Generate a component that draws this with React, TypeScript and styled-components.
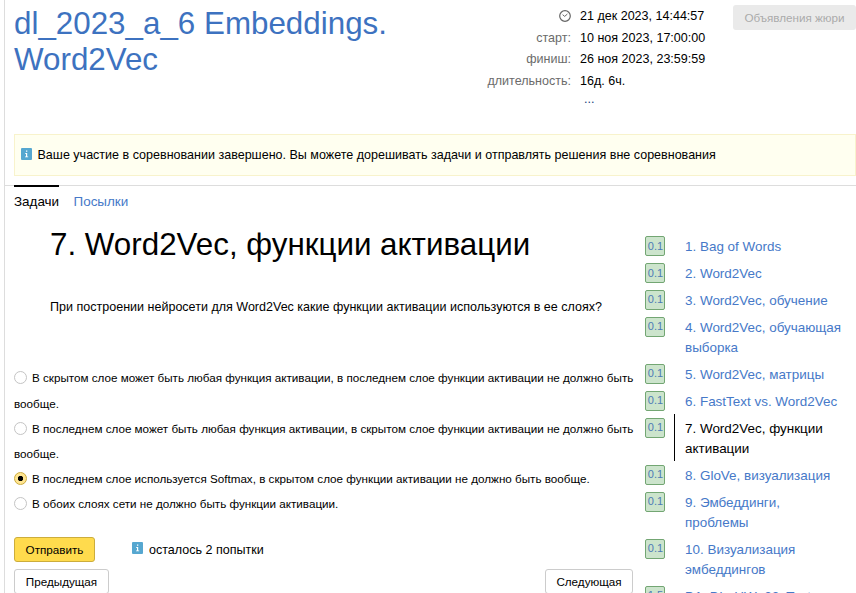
import React from "react";
import styled, { createGlobalStyle } from "styled-components";

const Global = createGlobalStyle`
  * { box-sizing: border-box; }
  html, body { margin: 0; height: 593px; overflow: hidden; background: #fff; }
  body { font-family: "Liberation Sans", Arial, sans-serif; font-size: 12.54px; color: #000; }
`;

const Page = styled.div`
  width: 852px; height: 593px; margin-left: 4px;
  border-left: 1px solid #ddd; overflow: hidden;
  display: flex; flex-direction: column;
`;
const Header = styled.header`
  display: flex; height: 134px; padding-left: 9px; flex: none;
`;
const Title = styled.h1`
  margin: 0; padding-top: 6px; width: 400px;
  font-size: 31.35px; line-height: 36px; font-weight: 400; color: #3d72c0;
`;
const Times = styled.dl`
  margin: 0; padding-top: 6px; width: 305px;
  display: grid; grid-template-columns: 157px 1fr; column-gap: 9px;
  grid-auto-rows: 21.6px; line-height: 21.6px; align-content: start;
`;
const TimeLabel = styled.dt`
  text-align: right; color: #6b6b6b;
  svg { display: inline-block; vertical-align: -2px; }
`;
const TimeValue = styled.dd<{ $more?: boolean }>`
  margin: 0; white-space: nowrap;
  ${(p) => p.$more && "padding-left: 4px; line-height: 15px; color: #1a3d7c;"}
`;
const JuryButton = styled.button`
  margin: 5px 0 0 14px; width: 123px; height: 25px; flex: none; padding: 0;
  border: 0; border-radius: 3px; background: #eaeaea; color: #aaa;
  font: 11.66px "Liberation Sans", Arial, sans-serif;
`;
const Notice = styled.div`
  height: 42px; margin-left: 9px; padding: 0 6px; flex: none;
  display: flex; align-items: center; gap: 5.5px;
  border: 1px solid #f8f3cc; background: #fffff0;
  svg { margin-top: -2px; }
`;
const Tabs = styled.nav`
  display: flex; gap: 14.4px; margin-top: 9px; padding-left: 9px; height: 33px; flex: none;
  border-top: 1px solid #ddd; font-size: 13.44px;
`;
const Tab = styled.a<{ $active?: boolean }>`
  margin-top: -1px; padding-top: 6px; line-height: 17px;
  border-top: 2px solid ${(p) => (p.$active ? "#000" : "transparent")};
  color: ${(p) => (p.$active ? "#000" : "#4679c8")};
`;
const Body = styled.div` display: flex; flex: 1; min-height: 0; `;
const Main = styled.main` width: 640px; padding-left: 9px; flex: none; `;
const Statement = styled.section` padding-left: 36px; height: 147px; `;
const ProblemTitle = styled.h2`
  margin: 0; padding-top: 9px; font-size: 31.35px; line-height: 36px; font-weight: 400; white-space: nowrap;
`;
const Question = styled.p` margin: 35px 0 0; line-height: 18px; white-space: nowrap; `;
const Options = styled.div` width: 622px; padding-top: 0.4px; font-size: 11.66px; line-height: 25.2px; `;
const Option = styled.label` display: block; `;
const Radio = styled.span<{ $checked?: boolean }>`
  display: inline-block; width: 13px; height: 13px; margin-right: 5px; vertical-align: -2px;
  border-radius: 50%; border: 1px solid ${(p) => (p.$checked ? "#ccab3c" : "#c4c4c4")};
  background: ${(p) => (p.$checked ? "radial-gradient(circle, #000 2.3px, #ffe591 3px)" : "#fff")};
`;
const SubmitRow = styled.div` display: flex; margin-top: 20.6px; height: 32px; `;
const Button = styled.button<{ $primary?: boolean; $width: number }>`
  width: ${(p) => p.$width}px; height: 25px; padding: 0; border-radius: 3px;
  border: 1px solid ${(p) => (p.$primary ? "#ccad3c" : "#ccc")};
  background: ${(p) => (p.$primary ? "#ffdb4d" : "#fff")};
  color: #000; font: 11.66px "Liberation Sans", Arial, sans-serif;
`;
const Attempts = styled.div`
  display: flex; gap: 6px; margin-left: 37px; padding-top: 4px; line-height: 19px;
  svg { margin-top: 1px; }
`;
const Pager = styled.div` display: flex; justify-content: space-between; width: 619px; `;
const Problems = styled.ol`
  margin: 15px 0 0; padding: 0; list-style: none; flex: 1; font-size: 13.44px; line-height: 20px;
`;
const Problem = styled.li`
  display: flex; align-items: flex-start;
  &:nth-child(n + 3) > span { line-height: 17px; }
`;
const Score = styled.span`
  width: 20px; height: 20px; margin-top: 3px; padding-left: 1px; flex: none; text-align: center;
  border: 1px solid #73a673; border-radius: 2px; background: #cce4cc;
  color: #4c7bb5; font-size: 11px; line-height: 18px;
`;
const ProblemName = styled.a<{ $active?: boolean }>`
  margin: -1px 0 1px 9px; padding: 5px 0 2px 10px; width: 178px;
  color: ${(p) => (p.$active ? "#000" : "#4679c8")};
  border-left: 1px solid ${(p) => (p.$active ? "#000" : "transparent")};
`;
const ProblemLine = styled.span` display: block; white-space: nowrap; `;

const ClockIcon = () => (
  <svg width="12" height="12" viewBox="0 0 12 12" fill="none" stroke="#666">
    <circle cx="6" cy="6" r="5.3" strokeWidth="1.2" />
    <path d="M3.6 4.7 5.7 6.4 8.4 4" />
  </svg>
);
const InfoIcon = () => (
  <svg width="11" height="12" viewBox="0 0 11 12">
    <rect width="11" height="12" rx="1" fill="#56a7d0" />
    <path d="M5 2.5h1.3v1.2H5zM4 5h2.2v3.5h1v.8H4v-.8h1V5.8H4z" fill="#fff" />
  </svg>
);

const times = [
  ["старт:", "10 ноя 2023, 17:00:00"],
  ["финиш:", "26 ноя 2023, 23:59:59"],
  ["длительность:", "16д. 6ч."],
];
const options = [
  "В скрытом слое может быть любая функция активации, в последнем слое функции активации не должно быть вообще.",
  "В последнем слое может быть любая функция активации, в скрытом слое функции активации не должно быть вообще.",
  "В последнем слое используется Softmax, в скрытом слое функции активации не должно быть вообще.",
  "В обоих слоях сети не должно быть функции активации.",
];
const problems: { score: string; lines: string[]; active?: boolean }[] = [
  { score: "0.1", lines: ["1. Bag of Words"] },
  { score: "0.1", lines: ["2. Word2Vec"] },
  { score: "0.1", lines: ["3. Word2Vec, обучение"] },
  { score: "0.1", lines: ["4. Word2Vec, обучающая", "выборка"] },
  { score: "0.1", lines: ["5. Word2Vec, матрицы"] },
  { score: "0.1", lines: ["6. FastText vs. Word2Vec"] },
  { score: "0.1", lines: ["7. Word2Vec, функции", "активации"], active: true },
  { score: "0.1", lines: ["8. GloVe, визуализация"] },
  { score: "0.1", lines: ["9. Эмбеддинги,", "проблемы"] },
  { score: "0.1", lines: ["10. Визуализация", "эмбеддингов"] },
  { score: "1.5", lines: ["D1. DL_HW_22. Text"] },
];

export default function App() {
  return (
    <>
      <Global />
      <Page>
        <Header>
          <Title>dl_2023_a_6 Embeddings. Word2Vec</Title>
          <Times>
            <TimeLabel><ClockIcon /></TimeLabel>
            <TimeValue>21 дек 2023, 14:44:57</TimeValue>
            {times.map(([label, value]) => (
              <React.Fragment key={label}>
                <TimeLabel>{label}</TimeLabel>
                <TimeValue>{value}</TimeValue>
              </React.Fragment>
            ))}
            <TimeLabel />
            <TimeValue $more>...</TimeValue>
          </Times>
          <JuryButton disabled>Объявления жюри</JuryButton>
        </Header>
        <Notice>
          <InfoIcon />
          <span>Ваше участие в соревновании завершено. Вы можете дорешивать задачи и отправлять решения вне соревнования</span>
        </Notice>
        <Tabs>
          <Tab $active>Задачи</Tab>
          <Tab>Посылки</Tab>
        </Tabs>
        <Body>
          <Main>
            <Statement>
              <ProblemTitle>7. Word2Vec, функции активации</ProblemTitle>
              <Question>При построении нейросети для Word2Vec какие функции активации используются в ее слоях?</Question>
            </Statement>
            <Options>
              {options.map((text, i) => (
                <Option key={text}><Radio $checked={i === 2} />{text}</Option>
              ))}
            </Options>
            <SubmitRow>
              <Button $primary $width={81}>Отправить</Button>
              <Attempts><InfoIcon /><span>осталось 2 попытки</span></Attempts>
            </SubmitRow>
            <Pager>
              <Button $width={95}>Предыдущая</Button>
              <Button $width={88}>Следующая</Button>
            </Pager>
          </Main>
          <Problems>
            {problems.map((p) => (
              <Problem key={p.lines[0]}>
                <Score>{p.score}</Score>
                <ProblemName $active={p.active}>
                  {p.lines.map((line) => <ProblemLine key={line}>{line}</ProblemLine>)}
                </ProblemName>
              </Problem>
            ))}
          </Problems>
        </Body>
      </Page>
    </>
  );
}
